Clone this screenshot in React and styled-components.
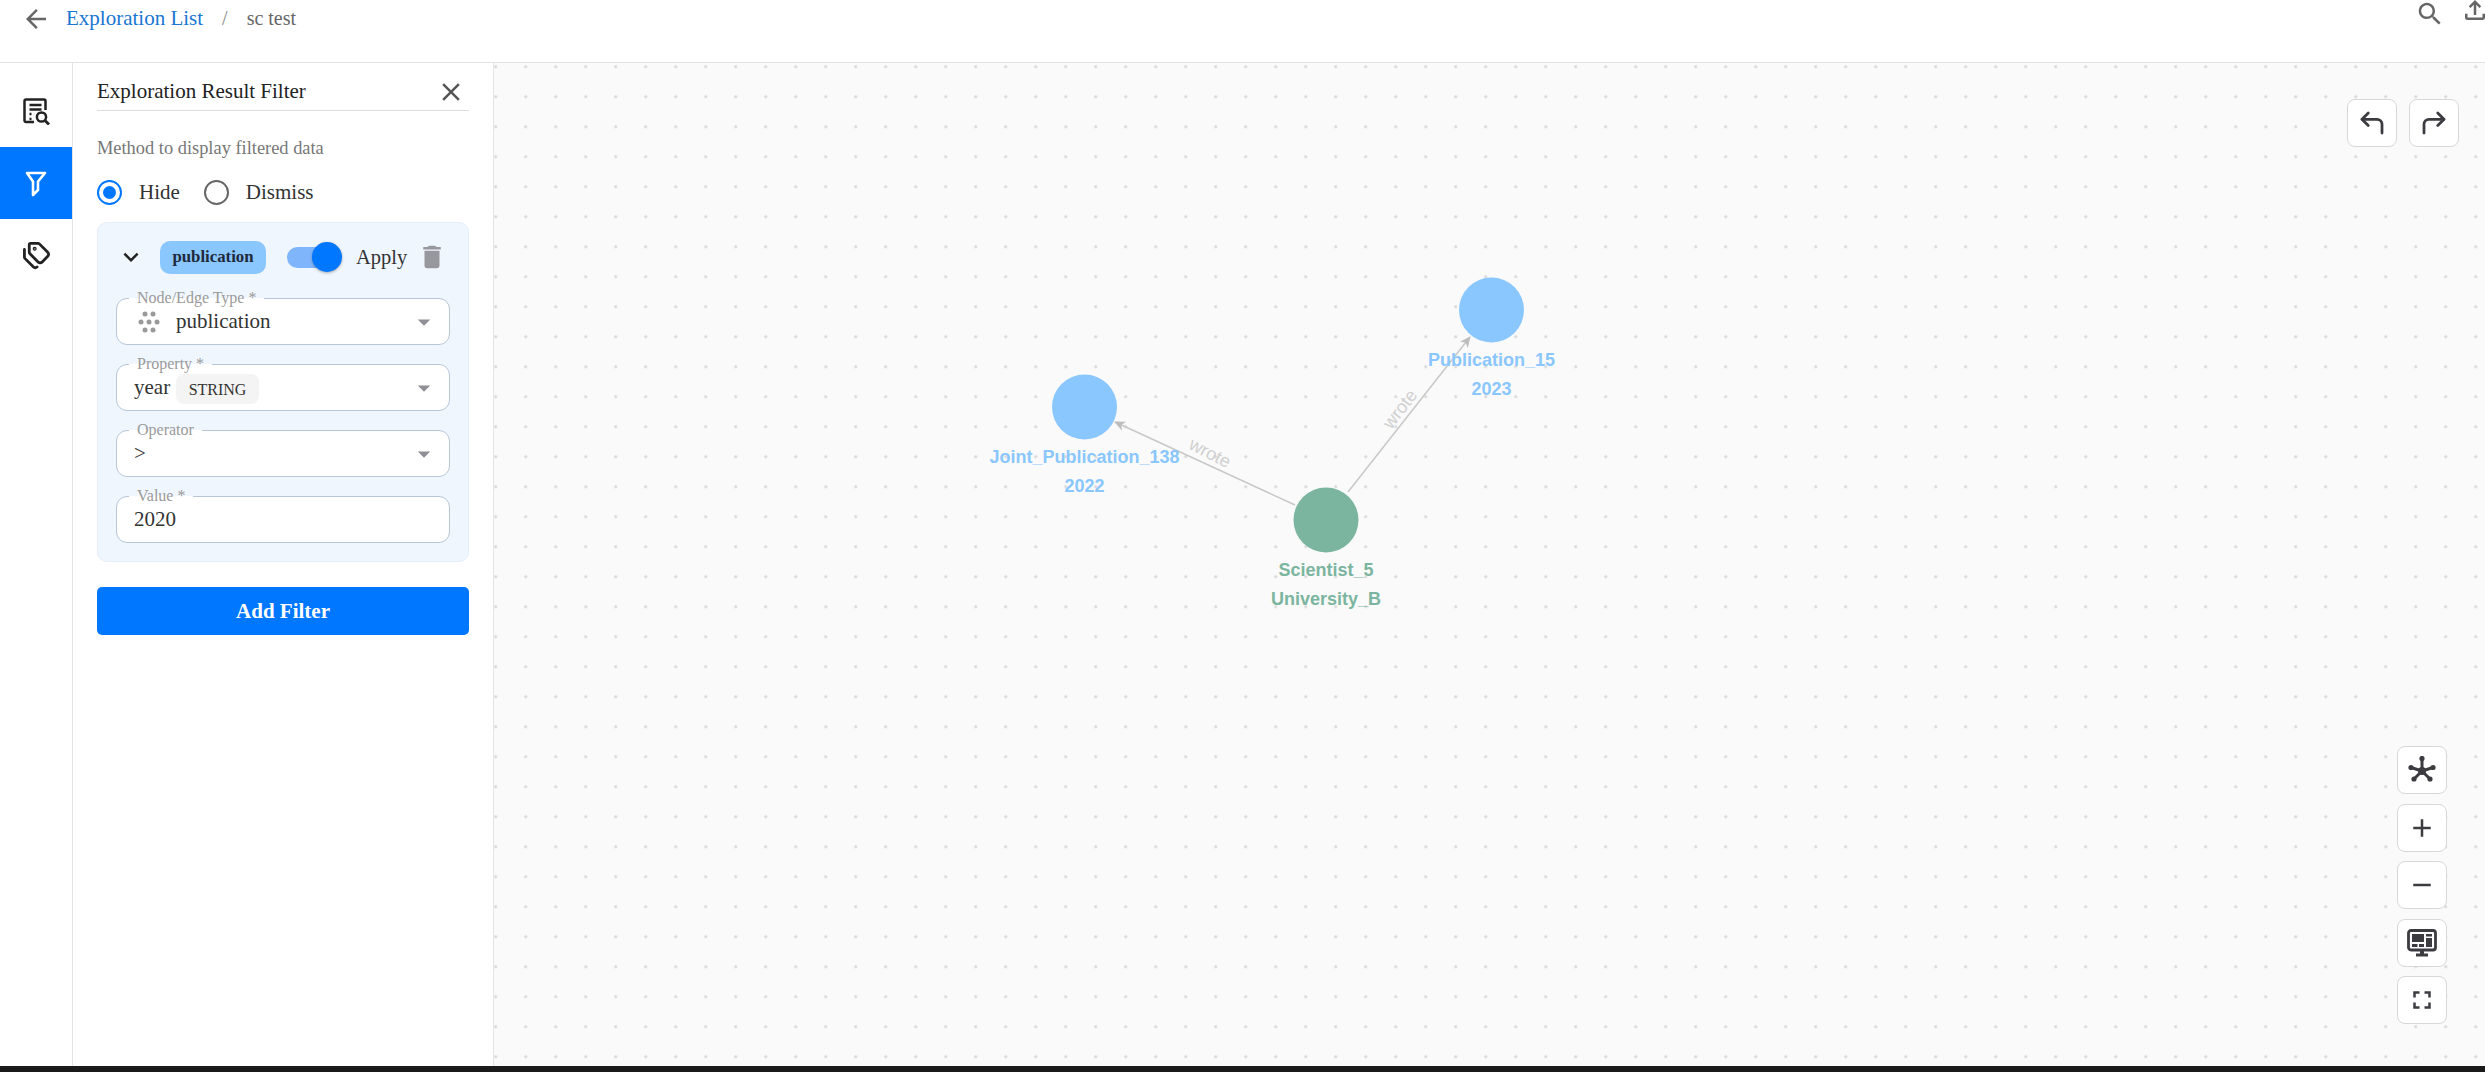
import React from 'react';
import styled, { createGlobalStyle } from 'styled-components';
import { CornerUpLeft, CornerUpRight, Tags } from 'lucide-react';

const GlobalStyle = createGlobalStyle`
    html, body {
        margin: 0;
        padding: 0;
        background: #fff;
    }
    body {
        font-family: "Liberation Serif", "Times New Roman", serif;
        color: #222;
    }
`

const Page = styled.div`
    width: 2485px;
    height: 1072px;
    display: flex;
    flex-direction: column;
    overflow: hidden;
`

const Header = styled.header`
    flex: 0 0 63px;
    box-sizing: border-box;
    display: flex;
    align-items: flex-start;
    justify-content: space-between;
    border-bottom: 1px solid #e4e4e4;
`

const Crumbs = styled.nav`
    display: flex;
    align-items: center;
    height: 36px;
    padding-left: 21px;
    font-size: 21px;
    color: #666;
`

const BackIcon = styled.span`
    display: flex;
    margin-top: 2px;
`

const CrumbLink = styled.a`
    margin-left: 15px;
    color: #1976d2;
`

const CrumbSeparator = styled.span`
    margin: 0 19px;
    color: #888;
    font-size: 20px;
`

const CrumbCurrent = styled.span`
    color: #666;
    font-size: 20px;
`

const HeaderTools = styled.div`
    display: flex;
    align-items: flex-start;
    gap: 15px;
    width: 70px;
    height: 30px;
    flex-shrink: 0;
    color: #666;
`

const HeaderIcon = styled.span`
    display: flex;
    flex-shrink: 0;
    margin-top: ${({ $top }) => $top}px;
`

const Main = styled.div`
    flex: 1;
    display: flex;
    min-height: 0;
`

const SideBar = styled.aside`
    flex: 0 0 73px;
    box-sizing: border-box;
    border-right: 1px solid #e4e4e4;
    padding-top: 12px;
    display: flex;
    flex-direction: column;
`

const SideItem = styled.div`
    width: 72px;
    height: 72px;
    display: flex;
    align-items: center;
    justify-content: center;
    color: ${({ $active }) => ($active ? '#fff' : '#222')};
    background: ${({ $active }) => ($active ? '#0077ff' : 'transparent')};
`

const FilterPanel = styled.section`
    flex: 0 0 421px;
    box-sizing: border-box;
    padding: 0 24px;
    border-right: 1px solid #e4e4e4;
`

const PanelTitle = styled.div`
    box-sizing: border-box;
    display: flex;
    align-items: center;
    justify-content: space-between;
    height: 48px;
    padding-top: 10px;
    border-bottom: 1px solid #ddd;
    font-size: 21px;
    color: #222;
`

const CloseWrap = styled.span`
    display: flex;
    margin-right: 3px;
    color: #555;
`

const MethodText = styled.div`
    margin-top: 25px;
    font-size: 18.4px;
    line-height: 24px;
    color: #777;
`

const RadioRow = styled.div`
    display: flex;
    align-items: center;
    height: 26px;
    margin-top: 19px;
    font-size: 21px;
    color: #333;
`

const Radio = styled.span`
    box-sizing: border-box;
    width: 25px;
    height: 25px;
    border-radius: 50%;
    border: 2.5px solid ${({ $on }) => ($on ? '#0077ff' : '#666')};
    display: flex;
    align-items: center;
    justify-content: center;
    margin-right: 17px;
    &::after {
        content: '';
        width: 13px;
        height: 13px;
        border-radius: 50%;
        background: ${({ $on }) => ($on ? '#0077ff' : 'transparent')};
    }
`

const RadioLabel = styled.span`
    margin-right: 24px;
`

const RuleCard = styled.div`
    box-sizing: border-box;
    height: 340px;
    margin-top: 17px;
    padding: 17px 18px 0;
    background: #f0f6fe;
    border: 1px solid #e4edf8;
    border-radius: 10px;
`

const RuleHead = styled.div`
    display: flex;
    align-items: center;
    height: 34px;
`

const Chevron = styled.span`
    display: flex;
    margin-right: 14px;
    color: #222;
`

const TypeChip = styled.span`
    width: 106px;
    height: 33px;
    display: flex;
    align-items: center;
    justify-content: center;
    border-radius: 10px;
    background: #8ac7ff;
    font-size: 16.8px;
    font-weight: 700;
    color: #1f2a3a;
`

const Switch = styled.span`
    position: relative;
    width: 48px;
    height: 21px;
    margin-left: 21px;
    border-radius: 11px;
    background: #7fb6fb;
    &::after {
        content: '';
        position: absolute;
        right: -7px;
        top: -5px;
        width: 30px;
        height: 30px;
        border-radius: 50%;
        background: #0077ff;
        box-shadow: 0 1px 3px rgba(0, 0, 0, 0.3);
    }
`

const ApplyLabel = styled.span`
    margin-left: 21px;
    font-size: 20.5px;
    color: #333;
`

const TrashWrap = styled.span`
    display: flex;
    margin-left: 10px;
    color: #97989e;
`

const Fields = styled.div`
    display: flex;
    flex-direction: column;
    gap: 19px;
    margin-top: 24px;
`

const Field = styled.div`
    position: relative;
    box-sizing: border-box;
    height: 47px;
    display: flex;
    align-items: center;
    padding: 0 17px;
    background: #fff;
    border: 1px solid #b8c6d8;
    border-radius: 11px;
    font-size: 21px;
    color: #333;
`

const FieldLabel = styled.span`
    position: absolute;
    left: 12px;
    top: -11px;
    padding: 0 8px;
    height: 20px;
    line-height: 20px;
    background: linear-gradient(to bottom, #f0f6fe 50%, #fff 50%);
    font-size: 16px;
    color: #9a9a9a;
`

const Caret = styled.span`
    display: flex;
    margin-left: auto;
    margin-right: -7px;
    color: #8f9096;
`

const TypeIcon = styled.span`
    display: flex;
    margin-left: 4px;
    margin-right: 16px;
`

const DataType = styled.span`
    margin-left: 6px;
    margin-top: 2px;
    padding: 0 12.5px;
    height: 30px;
    line-height: 31px;
    border-radius: 8px;
    background: #f4f4f4;
    font-size: 16px;
    color: #333;
`

const AddButton = styled.button`
    display: block;
    width: 100%;
    height: 48px;
    margin-top: 25px;
    border: none;
    border-radius: 5px;
    background: #0077ff;
    color: #fff;
    font-family: inherit;
    font-size: 21px;
    font-weight: 700;
`

const Canvas = styled.main`
    position: relative;
    flex: 1;
    background-color: #fafafa;
    background-image: radial-gradient(circle, #d6d6d6 1.2px, transparent 1.8px);
    background-size: 30px 30px;
    background-position: -13.3px -11.3px;
`

const GraphLayer = styled.svg`
    position: absolute;
    left: 0;
    top: 0;
    width: 100%;
    height: 100%;
    font-family: "Liberation Sans", Arial, sans-serif;
`

const HistoryTools = styled.div`
    position: absolute;
    top: 36px;
    right: 26px;
    display: flex;
    gap: 12px;
`

const ViewTools = styled.div`
    position: absolute;
    top: 683px;
    right: 38px;
    display: flex;
    flex-direction: column;
    gap: 9.5px;
`

const ToolButton = styled.div`
    box-sizing: border-box;
    width: 50px;
    height: 48px;
    display: flex;
    align-items: center;
    justify-content: center;
    background: #fff;
    border: 1px solid #d8d8d8;
    border-radius: 8px;
    color: #3c3c40;
`

const BottomBar = styled.div`
    flex: 0 0 6px;
    background: #1a1a1a;
`

const MuiIcon = ({ d, size = 24 }) => (
    <svg width={size} height={size} viewBox="0 0 24 24" fill="currentColor">
        <path d={d} />
    </svg>
)

const ICONS = {
    back: 'M20 11H7.83l5.59-5.59L12 4l-8 8 8 8 1.41-1.41L7.83 13H20v-2z',
    close: 'M19 6.41 17.59 5 12 10.59 6.41 5 5 6.41 10.59 12 5 17.59 6.41 19 12 13.41 17.59 19 19 17.59 13.41 12z',
    search: 'M15.5 14h-.79l-.28-.27C15.41 12.59 16 11.11 16 9.5 16 5.91 13.09 3 9.5 3S3 5.91 3 9.5 5.91 16 9.5 16c1.61 0 3.09-.59 4.23-1.57l.27.28v.79l5 4.99L20.49 19l-4.99-5zm-6 0C7.01 14 5 11.99 5 9.5S7.01 5 9.5 5 14 7.01 14 9.5 11.99 14 9.5 14z',
    upload: 'M18 15v3H6v-3H4v3c0 1.1.9 2 2 2h12c1.1 0 2-.9 2-2v-3h-2zM7 9l1.41 1.41L11 7.83V16h2V7.83l2.59 2.58L17 9l-5-5-5 5z',
    trash: 'M6 19c0 1.1.9 2 2 2h8c1.1 0 2-.9 2-2V7H6v12zM19 4h-3.5l-1-1h-5l-1 1H5v2h14V4z',
    expand: 'M16.59 8.59 12 13.17 7.41 8.59 6 10l6 6 6-6z',
    caret: 'M7 10l5 5 5-5z',
    plus: 'M19 13h-6v6h-2v-6H5v-2h6V5h2v6h6v2z',
    minus: 'M19 13H5v-2h14v2z',
    fullscreen: 'M7 14H5v5h5v-2H7v-3zm-2-4h2V7h3V5H5v5zm12 7h-3v2h5v-5h-2v3zM14 5v2h3v3h2V5h-5z',
}

const ReportSearchIcon = () => (
    <svg width="28" height="28" viewBox="0 0 28 28" fill="none" stroke="currentColor" strokeWidth="2.5">
        <path d="M12 25H4a1.500 1.500 0 0 1-1.500-1.500V4A1.500 1.500 0 0 1 4 2.500h18A1.500 1.500 0 0 1 23.500 4v9" />
        <path d="M7.500 8h12M7.500 12.500h12M7.500 17h2M7.500 22h2" />
        <circle cx="19.500" cy="20" r="4.600" fill="#fff" />
        <path d="M23 23.500 27 27.500" strokeWidth="2.800" />
    </svg>
)

const FunnelIcon = () => (
    <svg width="26" height="28" viewBox="0 0 26 28" fill="none" stroke="currentColor" strokeWidth="2.6" strokeLinejoin="round">
        <path d="M4 4h18l-7 8.500V21l-5 5V12.500z" />
    </svg>
)

// seven dots: two, three, two
const NodeDotsIcon = () => (
    <svg width="22" height="22" viewBox="0 0 22 22" fill="#999">
        {[[7, 3], [15, 3], [3, 11], [11, 11], [19, 11], [7, 19], [15, 19]].map(([cx, cy]) => (
            <circle key={`${cx}-${cy}`} cx={cx} cy={cy} r="2.500" />
        ))}
    </svg>
)

const GraphIcon = () => (
    <svg width="28" height="28" viewBox="0 0 28 28" fill="none" stroke="currentColor" strokeWidth="3">
        <path d="M14 15V2.500M14 15 3 11.500M14 15l11-3.500M14 15 6 23M14 15l8 8" />
        <g fill="currentColor" stroke="none">
            <circle cx="14" cy="15" r="4" />
            <circle cx="14" cy="2.500" r="2.600" />
            <circle cx="3" cy="11.500" r="2.600" />
            <circle cx="25" cy="11.500" r="2.600" />
            <circle cx="6" cy="23" r="2.600" />
            <circle cx="22" cy="23" r="2.600" />
        </g>
    </svg>
)

const MonitorIcon = () => (
    <svg width="30" height="28" viewBox="0 0 30 28">
        <rect x="1.500" y="1.500" width="27" height="19.500" rx="2.500" fill="none" stroke="currentColor" strokeWidth="2.800" />
        <g fill="currentColor">
            <rect x="5" y="5" width="12" height="8" />
            <rect x="19" y="5" width="6" height="2.500" />
            <rect x="19" y="9" width="6" height="9" />
            <rect x="5" y="15" width="5.500" height="3" />
            <rect x="12" y="15" width="5" height="3" />
            <rect x="13" y="22" width="4" height="3" />
            <rect x="9" y="24.500" width="12" height="3" />
        </g>
    </svg>
)

const NODES = [
    { id: 'joint', x: 590.5, y: 344, fill: '#8ac7ff', lines: ['Joint_Publication_138', '2022'] },
    { id: 'pub', x: 997.5, y: 247, fill: '#8ac7ff', lines: ['Publication_15', '2023'] },
    { id: 'sci', x: 832, y: 457, fill: '#7bb5a0', lines: ['Scientist_5', 'University_B'] },
]

const GraphView = () => (
    <GraphLayer>
        <defs>
            <marker id="edgeArrow" markerWidth="12" markerHeight="10" refX="10" refY="5" orient="auto" markerUnits="userSpaceOnUse">
                <path d="M0 0 L11 5 L0 10 L3 5 z" fill="#bdbdbd" />
            </marker>
        </defs>
        <line x1="801" y1="442" x2="621" y2="359" stroke="#c8c8c8" strokeWidth="1.500" markerEnd="url(#edgeArrow)" />
        <line x1="854" y1="429" x2="976" y2="274" stroke="#c8c8c8" strokeWidth="1.500" markerEnd="url(#edgeArrow)" />
        <text x="716" y="390" transform="rotate(27 716 390)" textAnchor="middle" dominantBaseline="central" fontSize="18" fill="#d0d0d0">wrote</text>
        <text x="906" y="346" transform="rotate(-52 906 346)" textAnchor="middle" dominantBaseline="central" fontSize="18" fill="#d0d0d0">wrote</text>
        {NODES.map(node => (
            <g key={node.id}>
                <circle cx={node.x} cy={node.y} r="32.500" fill={node.fill} />
                <text x={node.x} y={node.y + 56} textAnchor="middle" fontSize="18" fontWeight="700" fill={node.fill}>{node.lines[0]}</text>
                <text x={node.x} y={node.y + 85} textAnchor="middle" fontSize="18" fontWeight="700" fill={node.fill}>{node.lines[1]}</text>
            </g>
        ))}
    </GraphLayer>
)

const App = () => (
    <Page>
        <GlobalStyle />
        <Header>
            <Crumbs>
                <BackIcon><MuiIcon d={ICONS.back} size={30} /></BackIcon>
                <CrumbLink>Exploration List</CrumbLink>
                <CrumbSeparator>/</CrumbSeparator>
                <CrumbCurrent>sc test</CrumbCurrent>
            </Crumbs>
            <HeaderTools>
                <HeaderIcon $top={-1}><MuiIcon d={ICONS.search} size={30} /></HeaderIcon>
                <HeaderIcon $top={-5}><MuiIcon d={ICONS.upload} size={30} /></HeaderIcon>
            </HeaderTools>
        </Header>
        <Main>
            <SideBar>
                <SideItem><ReportSearchIcon /></SideItem>
                <SideItem $active><FunnelIcon /></SideItem>
                <SideItem><Tags size={29} strokeWidth={2.3} /></SideItem>
            </SideBar>
            <FilterPanel>
                <PanelTitle>
                    Exploration Result Filter
                    <CloseWrap><MuiIcon d={ICONS.close} size={30} /></CloseWrap>
                </PanelTitle>
                <MethodText>Method to display filtered data</MethodText>
                <RadioRow>
                    <Radio $on />
                    <RadioLabel>Hide</RadioLabel>
                    <Radio />
                    <span>Dismiss</span>
                </RadioRow>
                <RuleCard>
                    <RuleHead>
                        <Chevron><MuiIcon d={ICONS.expand} size={30} /></Chevron>
                        <TypeChip>publication</TypeChip>
                        <Switch />
                        <ApplyLabel>Apply</ApplyLabel>
                        <TrashWrap><MuiIcon d={ICONS.trash} size={30} /></TrashWrap>
                    </RuleHead>
                    <Fields>
                        <Field>
                            <FieldLabel>Node/Edge Type *</FieldLabel>
                            <TypeIcon><NodeDotsIcon /></TypeIcon>
                            publication
                            <Caret><MuiIcon d={ICONS.caret} size={30} /></Caret>
                        </Field>
                        <Field>
                            <FieldLabel>Property *</FieldLabel>
                            year
                            <DataType>STRING</DataType>
                            <Caret><MuiIcon d={ICONS.caret} size={30} /></Caret>
                        </Field>
                        <Field>
                            <FieldLabel>Operator</FieldLabel>
                            &gt;
                            <Caret><MuiIcon d={ICONS.caret} size={30} /></Caret>
                        </Field>
                        <Field>
                            <FieldLabel>Value *</FieldLabel>
                            2020
                        </Field>
                    </Fields>
                </RuleCard>
                <AddButton>Add Filter</AddButton>
            </FilterPanel>
            <Canvas>
                <GraphView />
                <HistoryTools>
                    <ToolButton><CornerUpLeft size={30} strokeWidth={2.2} /></ToolButton>
                    <ToolButton><CornerUpRight size={30} strokeWidth={2.2} /></ToolButton>
                </HistoryTools>
                <ViewTools>
                    <ToolButton><GraphIcon /></ToolButton>
                    <ToolButton><MuiIcon d={ICONS.plus} size={30} /></ToolButton>
                    <ToolButton><MuiIcon d={ICONS.minus} size={30} /></ToolButton>
                    <ToolButton><MonitorIcon /></ToolButton>
                    <ToolButton><MuiIcon d={ICONS.fullscreen} size={30} /></ToolButton>
                </ViewTools>
            </Canvas>
        </Main>
        <BottomBar />
    </Page>
)

export default App;
